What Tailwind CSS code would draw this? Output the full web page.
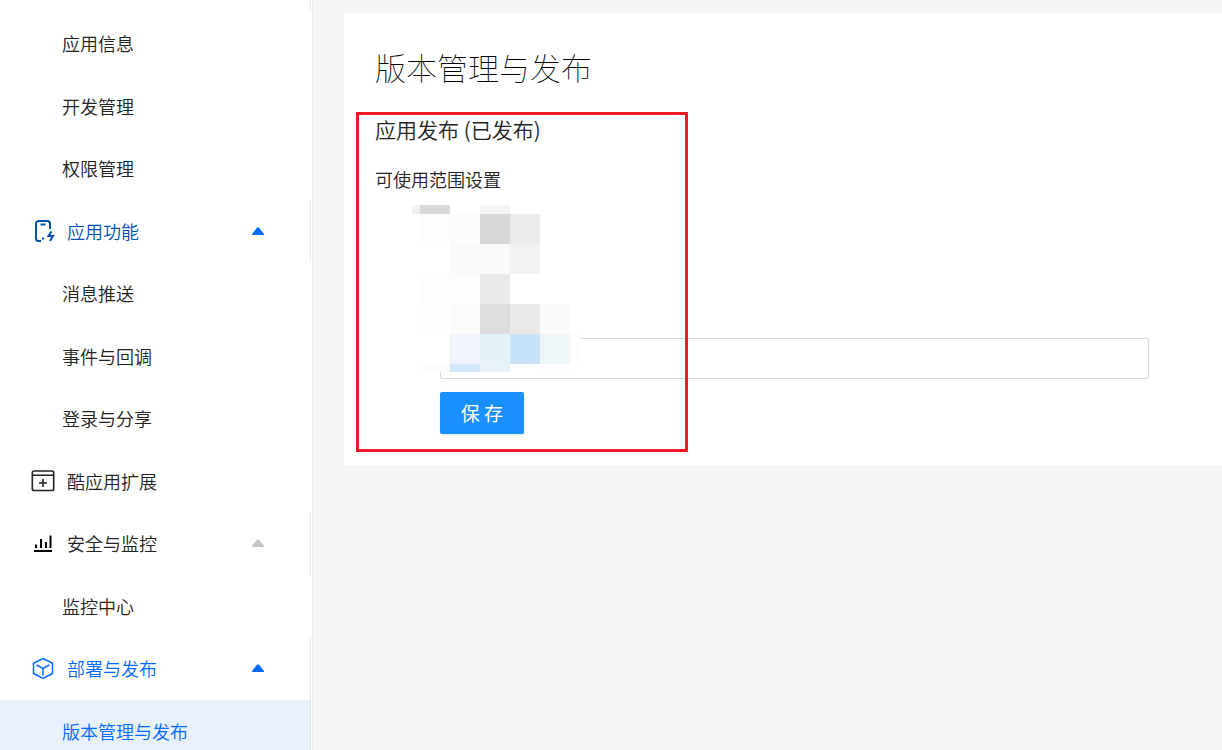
<!DOCTYPE html>
<html lang="zh-CN">
  <head>
    <meta charset="UTF-8" />
    <meta name="viewport" content="width=device-width, initial-scale=1.0" />
    <title>版本管理与发布</title>
    <script src="https://cdn.jsdelivr.net/npm/@tailwindcss/browser@4"></script>
  </head>

  <body class="font-['Noto_Sans_CJK_SC',sans-serif] text-[#222]">
    <div class="flex h-screen overflow-hidden bg-[#f5f5f5]">
      <!-- sidebar -->
      <nav class="w-[313px] shrink-0 border-r border-[#ebebeb] bg-white pr-px">
        <div class="h-3 border-r border-[#ebebeb]"></div>
        <ul class="grid h-[750px] auto-rows-fr text-lg font-[350]">
          <li><a href="#" class="flex h-full items-center pl-[62px]">应用信息</a></li>
          <li><a href="#" class="flex h-full items-center pl-[62px]">开发管理</a></li>
          <li><a href="#" class="flex h-full items-center pl-[62px]">权限管理</a></li>
          <li>
            <a href="#" class="flex h-full items-center border-r border-[#ebebeb] pr-[46px] pl-[31px] text-[#0050b3]">
              <svg class="mr-3 h-6 w-6" viewBox="0 0 24 24" fill="none" stroke="currentColor" stroke-width="2">
                <path d="M10 22H7.500A2.500 2.500 0 0 1 5 19.500V4.500A2.500 2.500 0 0 1 7.500 2H16.500A2.500 2.500 0 0 1 19 4.500V10" />
                <path d="M9.500 5.500h5M12 18.500v2" />
                <path d="M20.500 12.500l-3 4.500h4.500l-3 5" />
              </svg>
              <span class="grow">应用功能</span>
              <svg class="h-2 w-3" viewBox="0 0 12 8"><path fill="#006aff" d="M0 8V7L5 .8Q6-.2 7 .8L12 7V8z" /></svg>
            </a>
          </li>
          <li><a href="#" class="flex h-full items-center pl-[62px]">消息推送</a></li>
          <li><a href="#" class="flex h-full items-center pl-[62px]">事件与回调</a></li>
          <li><a href="#" class="flex h-full items-center pl-[62px]">登录与分享</a></li>
          <li>
            <a href="#" class="flex h-full items-center pl-[31px]">
              <svg class="mr-3 h-6 w-6" viewBox="0 0 24 24" fill="none" stroke="currentColor" stroke-width="1.6">
                <rect x="1.300" y="2" width="21.400" height="19.500" rx="1.800" />
                <path d="M1.500 6.200h21M12 10v8M8 14h8" />
              </svg>
              <span>酷应用扩展</span>
            </a>
          </li>
          <li>
            <a href="#" class="flex h-full items-center border-r border-[#ebebeb] pr-[46px] pl-[31px]">
              <svg class="mr-3 h-6 w-6" viewBox="0 0 24 24" fill="none" stroke="#000" stroke-width="2">
                <path d="M3 20h18M5 13.500V17M10 8v9M15 11v6M19.500 4.500V17" />
              </svg>
              <span class="grow">安全与监控</span>
              <svg class="h-2 w-3" viewBox="0 0 12 8"><path fill="#c4c4c4" d="M0 8V7L5 .8Q6-.2 7 .8L12 7V8z" /></svg>
            </a>
          </li>
          <li><a href="#" class="flex h-full items-center pl-[62px]">监控中心</a></li>
          <li>
            <a href="#" class="flex h-full items-center border-r border-[#ebebeb] pr-[46px] pl-[31px] text-[#006aff]">
              <svg class="mr-3 h-6 w-6" viewBox="0 0 24 24" fill="none" stroke="currentColor" stroke-width="1.5">
                <path d="M12 2.500l9.500 4.800v10.200L12 22.500l-9.500-5V7.300zM5.500 9L12 12.500 18.500 9M12 12.500v7" />
              </svg>
              <span class="grow">部署与发布</span>
              <svg class="h-2 w-3" viewBox="0 0 12 8"><path fill="#006aff" d="M0 8V7L5 .8Q6-.2 7 .8L12 7V8z" /></svg>
            </a>
          </li>
          <li>
            <a href="#" class="flex h-full items-center border-r border-[#d6e4f2] bg-[#e8f0fb] pl-[62px] text-[#006aff]">版本管理与发布</a>
          </li>
        </ul>
      </nav>

      <!-- content -->
      <main class="min-w-0 grow pt-[13px] pl-[31px]">
        <section class="relative bg-white pt-[30px] pr-[73px] pb-[31px] pl-[31px]">
          <h1 class="text-[31px] leading-[48px] font-thin text-black">版本管理与发布</h1>
          <h2 class="mt-[22px] text-[21px] leading-8 font-[350]">应用发布 (已发布)</h2>
          <form class="flex flex-col items-start">
            <label for="scope" class="mt-5 text-lg leading-7 font-[350]">可使用范围设置</label>
            <div class="mt-[145px] w-full pl-[65px]">
              <input id="scope" type="text" class="block h-[41px] w-full rounded-xs border border-[#d9d9d9] bg-white px-3" />
              <button
                type="button"
                class="mt-[13px] block h-[42px] w-[84px] rounded-xs bg-[#1890ff] text-[19px] text-white shadow-sm"
              >
                保 存
              </button>
            </div>
          </form>

          <!-- mosaic -->
          <div
            class="absolute top-[192px] left-[68px] grid grid-cols-[8px_30px_30px_30px_30px_30px_11px] grid-rows-[9px_30px_30px_30px_30px_30px_8px] bg-white"
          >
            <i class="bg-[#f2f2f2]"></i><i class="bg-[#d8d9d8]"></i><i></i><i class="bg-[#f5f5f5]"></i><i></i><i></i><i></i>
            <i></i><i class="bg-[#fdfdfd]"></i><i class="bg-[#fcfcfc]"></i><i class="bg-[#d7d9d8]"></i><i class="bg-[#ebebeb]"></i><i></i><i></i>
            <i></i><i></i><i class="bg-[#f9f9f9]"></i><i class="bg-[#fafafa]"></i><i class="bg-[#f1f1f1]"></i><i></i><i></i>
            <i></i><i class="bg-[#fdfdfd]"></i><i class="bg-[#fdfdfd]"></i><i class="bg-[#e9e9e7]"></i><i></i><i></i><i></i>
            <i></i><i class="bg-[#fefefe]"></i><i class="bg-[#fbfbfb]"></i><i class="bg-[#dedee1]"></i><i class="bg-[#e9e9e9]"></i><i class="bg-[#fafafa]"></i><i></i>
            <i></i><i></i><i class="bg-[#f0f5fd]"></i><i class="bg-[#e3f2f9]"></i><i class="bg-[#c8e3f7]"></i><i class="bg-[#eef6fa]"></i><i class="bg-[#fdfdfd]"></i>
            <i></i><i class="bg-[#fcfcfc]"></i><i class="bg-[#d1e8fd]"></i><i class="bg-[#e9f2fb]"></i><i></i><i class="bg-[#fdfdfd]"></i><i></i>
          </div>

          <!-- red highlight frame -->
          <div class="pointer-events-none absolute top-[99px] left-3 h-[340px] w-[332px] border-3 border-[#ed1c24]"></div>
        </section>
      </main>
    </div>
  </body>
</html>
